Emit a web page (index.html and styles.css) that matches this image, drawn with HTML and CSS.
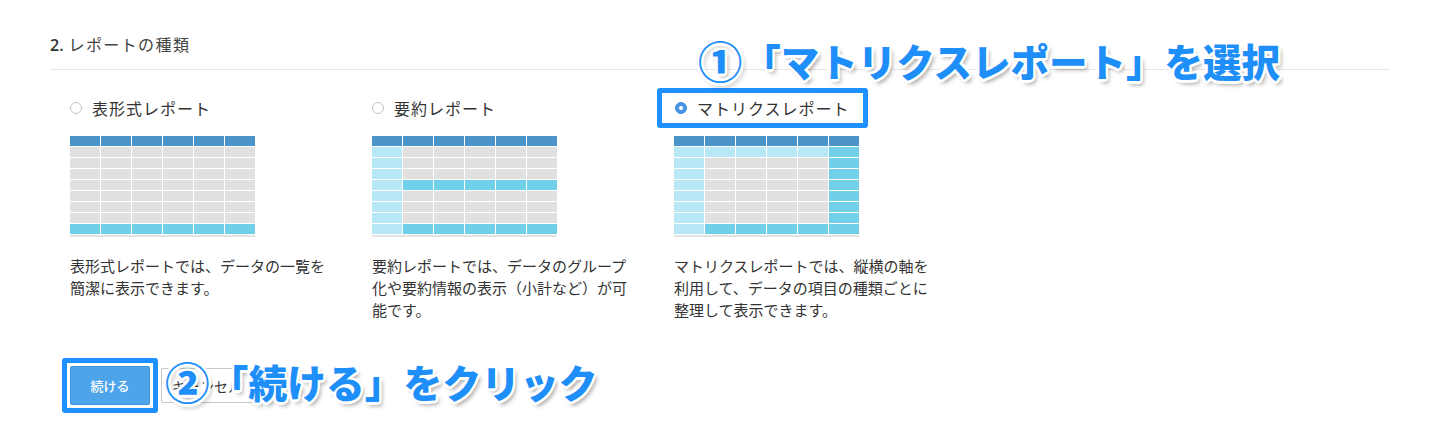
FILE: index.html
```html
<!DOCTYPE html>
<html lang="ja">
<head>
<meta charset="utf-8">
<title>レポートの種類</title>
<link rel="stylesheet" href="styles.css">
</head>
<body>
<div class="page">
  <h2 class="heading"><span class="num">2.</span> レポートの種類</h2>
  <div class="options">
    <div class="option">
      <label class="choice"><span class="radio"></span>表形式レポート</label>
      <div class="grid">
        <i class="h"></i><i class="h"></i><i class="h"></i><i class="h"></i><i class="h"></i><i class="h"></i>
        <i class="g"></i><i class="g"></i><i class="g"></i><i class="g"></i><i class="g"></i><i class="g"></i>
        <i class="g"></i><i class="g"></i><i class="g"></i><i class="g"></i><i class="g"></i><i class="g"></i>
        <i class="g"></i><i class="g"></i><i class="g"></i><i class="g"></i><i class="g"></i><i class="g"></i>
        <i class="g"></i><i class="g"></i><i class="g"></i><i class="g"></i><i class="g"></i><i class="g"></i>
        <i class="g"></i><i class="g"></i><i class="g"></i><i class="g"></i><i class="g"></i><i class="g"></i>
        <i class="g"></i><i class="g"></i><i class="g"></i><i class="g"></i><i class="g"></i><i class="g"></i>
        <i class="g"></i><i class="g"></i><i class="g"></i><i class="g"></i><i class="g"></i><i class="g"></i>
        <i class="c"></i><i class="c"></i><i class="c"></i><i class="c"></i><i class="c"></i><i class="c"></i>
      </div>
      <div class="bar"></div>
      <p class="desc">表形式レポートでは、データの一覧を簡潔に表示できます。</p>
    </div>
    <div class="option">
      <label class="choice"><span class="radio"></span>要約レポート</label>
      <div class="grid">
        <i class="h"></i><i class="h"></i><i class="h"></i><i class="h"></i><i class="h"></i><i class="h"></i>
        <i class="l"></i><i class="g"></i><i class="g"></i><i class="g"></i><i class="g"></i><i class="g"></i>
        <i class="l"></i><i class="g"></i><i class="g"></i><i class="g"></i><i class="g"></i><i class="g"></i>
        <i class="l"></i><i class="g"></i><i class="g"></i><i class="g"></i><i class="g"></i><i class="g"></i>
        <i class="l"></i><i class="c"></i><i class="c"></i><i class="c"></i><i class="c"></i><i class="c"></i>
        <i class="l"></i><i class="g"></i><i class="g"></i><i class="g"></i><i class="g"></i><i class="g"></i>
        <i class="l"></i><i class="g"></i><i class="g"></i><i class="g"></i><i class="g"></i><i class="g"></i>
        <i class="l"></i><i class="g"></i><i class="g"></i><i class="g"></i><i class="g"></i><i class="g"></i>
        <i class="l"></i><i class="c"></i><i class="c"></i><i class="c"></i><i class="c"></i><i class="c"></i>
      </div>
      <div class="bar"></div>
      <p class="desc">要約レポートでは、データのグループ化や要約情報の表示（小計など）が可能です。</p>
    </div>
    <div class="option">
      <label class="choice selected"><span class="radio on"></span>マトリクスレポート</label>
      <div class="grid">
        <i class="h"></i><i class="h"></i><i class="h"></i><i class="h"></i><i class="h"></i><i class="h"></i>
        <i class="l"></i><i class="l"></i><i class="l"></i><i class="l"></i><i class="l"></i><i class="c"></i>
        <i class="l"></i><i class="g"></i><i class="g"></i><i class="g"></i><i class="g"></i><i class="c"></i>
        <i class="l"></i><i class="g"></i><i class="g"></i><i class="g"></i><i class="g"></i><i class="c"></i>
        <i class="l"></i><i class="g"></i><i class="g"></i><i class="g"></i><i class="g"></i><i class="c"></i>
        <i class="l"></i><i class="g"></i><i class="g"></i><i class="g"></i><i class="g"></i><i class="c"></i>
        <i class="l"></i><i class="g"></i><i class="g"></i><i class="g"></i><i class="g"></i><i class="c"></i>
        <i class="l"></i><i class="g"></i><i class="g"></i><i class="g"></i><i class="g"></i><i class="c"></i>
        <i class="l"></i><i class="c"></i><i class="c"></i><i class="c"></i><i class="c"></i><i class="c"></i>
      </div>
      <div class="bar"></div>
      <p class="desc">マトリクスレポートでは、縦横の軸を利用して、データの項目の種類ごとに整理して表示できます。</p>
    </div>
  </div>
  <div class="actions">
    <span class="focus"><button class="primary">続ける</button></span>
    <button class="cancel">キャンセル</button>
  </div>
  <div class="callout c1"><span class="circ">①</span>「マトリクスレポート」を選択</div>
  <div class="callout c2"><span class="circ">②</span>「続ける」をクリック</div>
</div>
</body>
</html>
```
FILE: styles.css
```css
* { box-sizing: border-box; }
html, body { margin: 0; background: #fff; }
body {
  font-family: "Noto Sans CJK JP", "Noto Sans", sans-serif;
  color: #333;
}
.page {
  position: relative;
  width: 1440px;
  height: 444px;
  overflow: hidden;
}
.heading {
  margin: 0 50px;
  padding: 33px 0 14px;
  height: 70px;
  border-bottom: 1px solid #e6e6e6;
  font-size: 16px;
  line-height: 22px;
  font-weight: 400;
  color: #444;
  letter-spacing: 1.4px;
}
.num {
  font-family: "Open Sans", "Noto Sans", sans-serif;
  font-weight: 600;
  color: #333;
  letter-spacing: 0;
}
.options {
  display: flex;
  padding-left: 70px;
  margin-top: 18px;
}
.option { width: 302px; }
.choice {
  display: flex;
  align-items: center;
  gap: 10px;
  height: 40px;
  font-size: 16px;
  letter-spacing: 1px;
  color: #333;
}
.choice.selected {
  width: fit-content;
  margin-left: -17px;
  padding: 0 13px 0 13px;
  border: 5px solid #1e90ff;
  border-radius: 3px;
}
.radio {
  width: 12px;
  height: 12px;
  border-radius: 50%;
  border: 1px solid #c4c4c4;
  background: #fff;
  flex: none;
  position: relative;
}
.radio.on {
  border-color: #3f8fe0;
  background: #4a94e6;
}
.radio.on::after {
  content: "";
  position: absolute;
  left: 3px;
  top: 3px;
  width: 4px;
  height: 4px;
  border-radius: 50%;
  background: #fff;
}
.grid {
  margin-top: 8px;
  width: 185px;
  display: grid;
  grid-template-columns: repeat(6, 30px);
  grid-auto-rows: 10px;
  gap: 1px;
}
.grid i { display: block; }
.grid .h { background: #4a94c9; }
.grid .g { background: #e0e0e0; }
.grid .l { background: #b8e7f6; }
.grid .c { background: #70cfe9; }
.bar {
  width: 185px;
  height: 2px;
  margin-top: 1px;
  background: #e3e3e3;
}
.desc {
  margin: 18px 0 0;
  width: 262px;
  font-size: 15px;
  line-height: 22px;
  color: #333;
}
.actions {
  display: flex;
  align-items: center;
  gap: 3px;
  margin-top: 37px;
  padding-left: 62px;
}
.focus {
  display: flex;
  padding: 3px;
  border: 5px solid #1e90ff;
  border-radius: 3px;
}
.primary {
  width: 80px;
  height: 39px;
  background: #4ea4e9;
  border: 1px solid #3f95dd;
  border-radius: 2px;
  color: #fff;
  font-family: inherit;
  font-size: 13px;
  font-weight: 500;
  padding: 0;
}
.cancel {
  width: 92px;
  height: 35px;
  background: #fff;
  border: 1px solid #c8c8c8;
  border-radius: 2px;
  color: #333;
  font-family: inherit;
  font-size: 14px;
  padding: 0;
}
.callout {
  position: absolute;
  margin: 0;
  font-weight: 900;
  color: #1e8ff8;
  line-height: 1;
  white-space: nowrap;
  text-shadow:
    2.5px 0 #fff, -2.5px 0 #fff, 0 2.5px #fff, 0 -2.5px #fff,
    1.8px 1.8px #fff, -1.8px 1.8px #fff, 1.8px -1.8px #fff, -1.8px -1.8px #fff,
    3px 4px 4px rgba(0, 0, 0, 0.35);
}
.circ {
  display: inline-block;
  font-size: 1.15em;
  line-height: 0.87;
  vertical-align: top;
}
.c1 { left: 698px; top: 41px; font-size: 38.5px; }
.c2 { left: 165px; top: 362px; font-size: 38.8px; }
```
